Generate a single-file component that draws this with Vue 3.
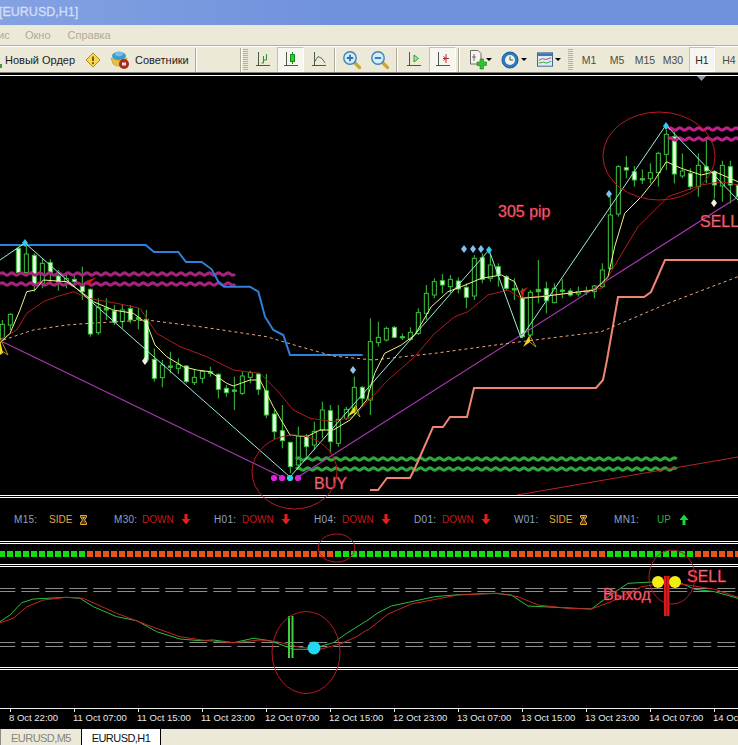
<script setup>
// all chart readings are in 3x crop units, converted to page pixels here
const left = (x, y) => [x / 3, 230 + y / 3];
const right = (x, y) => [368 + x / 3, 90 + y / 3];

function toPts(list, conv) {
  return list.map(([x, y]) => conv(x, y).map((v) => v.toFixed(1)).join(",")).join(" ");
}

function joinPts(a, b) {
  return toPts(a, left) + " " + toPts(b, right);
}

function wave(x0, x1, y, period, amp) {
  let d = `M${x0} ${y}`;
  let up = true;
  for (let x = x0; x < x1 - period / 2; x += period / 2) {
    d += ` Q${x + period / 4} ${y + (up ? -amp : amp) * 2} ${x + period / 2} ${y}`;
    up = !up;
  }
  return d;
}

// [bodyTop, bodyBottom, high, low, kind]  w = white filled, h = hollow, d = doji
const leftCandles = [
  [283, 325, 270, 330, "h"], [253, 285, 250, 300, "h"], [55, 128, 50, 135, "w"], [72, 128, 40, 135, "h"],
  [76, 165, 70, 185, "w"], [100, 160, 85, 175, "h"], [98, 130, 88, 165, "w"], [138, 155, 120, 182, "w"],
  [146, 155, 125, 175, "h"], [148, 155, 130, 165, "w"], [165, 185, 110, 210, "w"], [178, 312, 175, 320, "w"],
  [232, 308, 205, 315, "h"], [234, 240, 205, 270, "d"], [243, 277, 225, 285, "w"], [240, 275, 225, 295, "h"],
  [236, 270, 225, 280, "w"], [263, 268, 235, 298, "d"], [268, 390, 240, 395, "w"], [388, 445, 355, 455, "w"],
  [405, 443, 390, 472, "h"], [408, 412, 365, 430, "d"], [403, 415, 385, 432, "h"], [408, 455, 405, 460, "w"],
  [442, 458, 420, 465, "h"], [424, 445, 420, 460, "h"], [425, 430, 410, 440, "d"], [433, 478, 430, 505, "w"],
  [475, 488, 465, 500, "w"], [480, 484, 440, 540, "d"], [438, 490, 425, 495, "h"], [428, 442, 422, 460, "h"],
  [432, 478, 428, 495, "w"], [482, 555, 432, 565, "w"], [552, 605, 540, 630, "w"], [602, 632, 525, 655, "w"],
  [637, 710, 635, 730, "w"], [618, 705, 590, 720, "h"], [618, 650, 612, 680, "w"], [604, 645, 575, 660, "h"],
  [540, 600, 515, 625, "h"], [542, 635, 525, 670, "w"], [568, 640, 525, 650, "h"], [538, 565, 530, 570, "h"],
  [472, 540, 440, 555, "h"], [472, 505, 468, 530, "w"], [335, 510, 265, 555, "h"],
];
const rightCandles = [
  [742, 758, 695, 770, "h"], [715, 750, 710, 755, "h"], [712, 742, 708, 745, "w"], [740, 743, 730, 750, "d"],
  [727, 748, 712, 752, "h"], [668, 730, 655, 735, "h"], [610, 670, 585, 690, "h"], [575, 615, 565, 625, "h"],
  [572, 585, 552, 610, "w"], [568, 590, 555, 610, "h"], [573, 597, 562, 610, "w"], [592, 622, 580, 655, "w"],
  [505, 618, 495, 630, "h"], [503, 568, 490, 580, "w"], [525, 565, 490, 575, "h"], [530, 555, 520, 590, "w"],
  [560, 595, 555, 600, "w"], [596, 600, 565, 630, "d"], [625, 740, 595, 745, "w"], [607, 735, 600, 740, "h"],
  [598, 605, 510, 640, "d"], [596, 632, 575, 670, "w"], [595, 638, 580, 640, "h"], [600, 604, 568, 625, "d"],
  [603, 615, 595, 620, "w"], [605, 612, 590, 620, "h"], [602, 606, 590, 615, "d"], [588, 605, 585, 625, "h"],
  [540, 590, 520, 595, "h"], [375, 535, 320, 540, "h"], [230, 372, 225, 380, "h"], [233, 240, 198, 265, "w"],
  [245, 270, 228, 290, "w"], [266, 270, 238, 282, "d"], [248, 266, 220, 280, "h"], [190, 248, 185, 290, "h"],
  [133, 193, 120, 240, "h"], [140, 252, 125, 280, "w"], [243, 258, 190, 265, "h"], [250, 290, 235, 300, "w"],
  [226, 290, 190, 320, "h"], [230, 243, 150, 280, "w"], [245, 285, 240, 325, "w"], [226, 288, 212, 335, "h"],
  [230, 285, 212, 340, "w"], [285, 320, 275, 340, "w"],
];

const candles = [
  ...leftCandles.map((c, i) => ({ c, x: 2.33 + 8 * i, y: 230 })),
  ...rightCandles.map((c, i) => ({ c, x: 2.33 + 8 * (i + 47), y: 90 })),
].map(({ c, x, y }) => ({
  x,
  top: y + c[0] / 3,
  h: Math.max((c[1] - c[0]) / 3, 1.2),
  high: y + c[2] / 3,
  low: y + c[3] / 3,
  kind: c[4],
}));

const bluePts = toPts(
  [[0, 45], [437, 45], [462, 66], [535, 66], [558, 96], [605, 96], [635, 118], [655, 155], [672, 170], [750, 170],
   [775, 185], [795, 260], [820, 300], [850, 315], [870, 375], [1088, 375]],
  left
);
const salmonPts =
  "370,490 378,490 387,478 410,478 415,468 433,427 443,427 450,417 467,417 474,388 596,388 603,380 607,360 618,297 644,297 651,292 665,260 738,260";
const zigzagPts = "0,260 25,243 290,477 489,250 521,338 666,125 738,200";

const yellowPts = joinPts(
  [[0, 340], [30, 310], [60, 240], [80, 185], [105, 180], [130, 150], [200, 155], [250, 190], [280, 215], [340, 240],
   [400, 250], [440, 280], [465, 345], [500, 380], [550, 410], [590, 420], [630, 425], [680, 460], [700, 468],
   [750, 450], [780, 450], [820, 530], [870, 615], [920, 620], [960, 600], [1000, 600], [1050, 570], [1100, 510]],
  [[20, 850], [50, 790], [100, 765], [140, 735], [190, 650], [240, 605], [280, 590], [340, 565], [400, 555],
   [440, 575], [460, 625], [520, 620], [600, 610], [680, 600], [720, 560], [740, 470], [770, 370], [820, 320],
   [860, 270], [895, 215], [940, 235], [1000, 255], [1040, 245], [1110, 275]]
);
const redPts = joinPts(
  [[0, 330], [50, 300], [80, 250], [130, 215], [170, 200], [220, 185], [265, 205], [350, 220], [420, 235], [470, 310],
   [540, 350], [620, 380], [700, 420], [780, 430], [830, 480], [880, 540], [930, 565], [1000, 575], [1060, 560]],
  [[60, 870], [140, 800], [200, 730], [260, 680], [300, 665], [360, 615], [420, 600], [460, 625], [520, 618],
   [600, 610], [700, 595], [750, 510], [810, 410], [880, 340], [900, 320], [1000, 285], [1060, 275], [1110, 285]]
);
const dashPts = joinPts(
  [[10, 330], [100, 300], [200, 285], [270, 280], [440, 270], [600, 290], [800, 320], [900, 350], [1000, 378]],
  [[15, 810], [200, 790], [420, 760], [700, 725], [900, 640], [1110, 560]]
);

const waves = [
  { d: wave(0, 237, 274, 9.4, 1.2), color: "#a8247c" },
  { d: wave(0, 237, 284, 9.4, 1.2), color: "#a8247c" },
  { d: wave(668, 745, 129, 9.4, 1.2), color: "#c0208a" },
  { d: wave(668, 745, 139, 9.4, 1.2), color: "#c0208a" },
  { d: wave(296, 678, 459, 9.4, 1.2), color: "#2ea83c" },
  { d: wave(296, 678, 469, 9.4, 1.2), color: "#2ea83c" },
];

const diamonds = [
  [25, 243, "#35c8f0"], [464, 249, "#7cc0f4"], [473, 249, "#7cc0f4"], [481, 249, "#7cc0f4"], [489, 250, "#35c8f0"],
  [609, 194, "#7cc0f4"], [666, 126, "#35c8f0"], [353, 370, "#8cc4ec"], [145, 361, "#f4f4e8"], [714, 203, "#f4f4e8"],
];
const dots = [[274, "#e020e0"], [282, "#e020e0"], [290, "#30d0e0"], [298, "#e020e0"]];

const status = [
  { tf: "M15:", text: "SIDE", kind: "side" },
  { tf: "M30:", text: "DOWN", kind: "down" },
  { tf: "H01:", text: "DOWN", kind: "down" },
  { tf: "H04:", text: "DOWN", kind: "down" },
  { tf: "D01:", text: "DOWN", kind: "down" },
  { tf: "W01:", text: "SIDE", kind: "side" },
  { tf: "MN1:", text: "UP", kind: "up" },
];

function barColor(i) {
  if (i <= 10 || (i >= 42 && i <= 63) || (i >= 76 && i <= 86)) return "green";
  return "orange";
}
const squares = Array.from({ length: 93 }, (_, i) => barColor(i));

const oscGreen = joinOsc(
  [[0, 395], [30, 375], [65, 338], [100, 327], [200, 322], [240, 325], [280, 350], [350, 380], [410, 392], [470, 425],
   [540, 447], [600, 452], [640, 450], [700, 458], [760, 445], [810, 452], [860, 470], [880, 478], [930, 478],
   [1000, 458], [1040, 430], [1100, 392]],
  [[0, 390], [30, 368], [70, 348], [200, 320], [270, 314], [380, 310], [430, 315], [480, 348], [560, 352], [670, 357],
   [720, 320], [780, 280], [870, 275], [940, 280], [980, 298], [1040, 305], [1110, 325]]
);
const oscRed = joinOsc(
  [[0, 398], [40, 385], [80, 350], [130, 330], [200, 322], [250, 325], [350, 370], [450, 408], [540, 440], [620, 452],
   [700, 458], [780, 450], [830, 455], [900, 472], [960, 478], [1020, 462], [1070, 440], [1100, 420]],
  [[0, 420], [60, 372], [130, 342], [270, 315], [390, 310], [450, 320], [510, 345], [600, 355], [670, 357], [730, 335],
   [820, 290], [900, 278], [960, 285], [1040, 298], [1110, 322]]
);

function joinOsc(a, b) {
  const conv = (ox) => (p) => `${(ox + p[0] / 3).toFixed(1)},${(490 + p[1] / 3).toFixed(1)}`;
  return a.map(conv(0)).join(" ") + " " + b.map(conv(368)).join(" ");
}

const labels = [
  "8 Oct 22:00", "11 Oct 07:00", "11 Oct 15:00", "11 Oct 23:00", "12 Oct 07:00", "12 Oct 15:00",
  "12 Oct 23:00", "13 Oct 07:00", "13 Oct 15:00", "13 Oct 23:00", "14 Oct 07:00", "14 Oct 15:00",
];
const timeframes = ["M1", "M5", "M15", "M30", "H1", "H4"];
</script>

<template>
  <div class="terminal">
    <header class="title">[EURUSD,H1]</header>

    <nav class="menu">
      <span class="first">ис</span>
      <span>Окно</span>
      <span>Справка</span>
    </nav>

    <div class="toolbar">
      <svg class="stub" width="5" height="25" viewBox="0 0 5 25"><rect x="0" y="17" width="2" height="4" fill="#3c9a3c" /></svg>
      <span class="tb-label order">Новый Ордер</span>
      <span class="tool warn">
        <svg width="16" height="16" viewBox="0 0 16 16">
          <path d="M8 1 15 8 8 15 1 8Z" fill="#f8d84c" stroke="#b08a2c" stroke-linejoin="round" />
          <path d="M8 4.5V9" stroke="#7a5a10" stroke-width="2" />
          <circle cx="8" cy="11.2" r="1.1" fill="#7a5a10" />
        </svg>
      </span>
      <span class="tool expert">
        <svg width="20" height="20" viewBox="0 0 20 20">
          <ellipse cx="9" cy="6" rx="7" ry="4.2" fill="#3f9ad0" />
          <ellipse cx="9" cy="3.8" rx="4" ry="2.4" fill="#76c0e8" />
          <path d="M1 8 Q9 12 17 8 L15 15 Q8 18 3 14Z" fill="#e4c23e" stroke="#a8892a" stroke-width=".5" />
          <circle cx="14" cy="14" r="5" fill="#b02818" />
          <rect x="12" y="12.5" width="4" height="3" fill="#f2e6d8" />
        </svg>
      </span>
      <span class="tb-label advisors">Советники</span>
      <i class="sep"></i>
      <span class="tb-gap"></span>
      <i class="sep"></i>
      <i class="grip"></i>

      <span class="tool w29">
        <svg width="16" height="18" viewBox="0 0 16 18" fill="none" stroke="#4c5a48">
          <path d="M3.5 1V15M1 14.500H15" />
          <path d="M8.500 5V12M11.500 3V9" stroke="#2f8f2f" />
          <path d="M6.500 12H8.500M11.500 9H9" stroke="#2f8f2f" />
        </svg>
      </span>
      <span class="tool w27 on">
        <svg width="16" height="18" viewBox="0 0 16 18" fill="none" stroke="#4c5a48">
          <path d="M3.500 1V15M1 14.500H15" />
          <path d="M9.500 1V13" stroke="#1c8a1c" />
          <rect x="7.500" y="3.500" width="4" height="7" fill="#29d029" stroke="#1c8a1c" />
        </svg>
      </span>
      <span class="tool w29">
        <svg width="16" height="18" viewBox="0 0 16 18" fill="none" stroke="#4c5a48">
          <path d="M3.500 1V15M1 14.500H15" />
          <path d="M3.500 11 7 5.500 11 7.500 14 12" stroke="#5c6c58" />
        </svg>
      </span>
      <i class="sep s-zoom"></i>
      <span class="tool z-first">
        <svg width="20" height="20" viewBox="0 0 20 20">
          <path d="M12 12 17.500 17.500" stroke="#c8a83c" stroke-width="3.400" stroke-linecap="round" />
          <circle cx="8" cy="8" r="6.200" fill="#d4ecf8" stroke="#3f82b4" stroke-width="1.400" />
          <path d="M4.800 8H11.200M8 4.800V11.200" stroke="#2c70b8" stroke-width="1.800" />
        </svg>
      </span>
      <span class="tool">
        <svg width="20" height="20" viewBox="0 0 20 20">
          <path d="M12 12 17.500 17.500" stroke="#c8a83c" stroke-width="3.400" stroke-linecap="round" />
          <circle cx="8" cy="8" r="6.200" fill="#d4ecf8" stroke="#3f82b4" stroke-width="1.400" />
          <path d="M4.800 8H11.200" stroke="#2c70b8" stroke-width="1.800" />
        </svg>
      </span>
      <i class="sep s-mid"></i>
      <span class="tool t-first">
        <svg width="16" height="18" viewBox="0 0 16 18" fill="none" stroke="#4c5a48">
          <path d="M3.500 1V15M1 14.500H15" />
          <path d="M8 4 12.500 7.500 8 11Z" fill="#9fe89f" stroke="#2f9f2f" />
        </svg>
      </span>
      <span class="tool w27 on t-active">
        <svg width="16" height="18" viewBox="0 0 16 18" fill="none" stroke="#4c5a48">
          <path d="M3.500 1V15M1 14.500H15" />
          <path d="M11 3V12M8 7.500H14" stroke="#b83030" />
          <path d="M8.500 5.500 11 7.500 8.500 9.500" stroke="#b83030" />
        </svg>
      </span>
      <i class="sep s-drop"></i>
      <span class="drop d-new">
        <svg width="20" height="21" viewBox="0 0 20 21">
          <path d="M2.500 1.500H10L13 4.500V15H2.500Z" fill="#f7f6f0" stroke="#6c6c64" />
          <path d="M6 5V12M4 8H8" stroke="#6c6c64" />
          <path d="M9 13H12V10H15.500V13H18.500V16.500H15.500V20H12V16.500H9Z" fill="#33c233" stroke="#1d7a1d" stroke-width=".6" />
        </svg>
        <b class="caret"></b>
      </span>
      <span class="drop d-clock">
        <svg width="18" height="18" viewBox="0 0 18 18">
          <circle cx="9" cy="9" r="8" fill="#2a7cc4" stroke="#1b5a98" />
          <circle cx="9" cy="9" r="5" fill="#f4f2e6" />
          <path d="M9 5.500V9H12" stroke="#4a4a30" fill="none" />
        </svg>
        <b class="caret"></b>
      </span>
      <span class="drop d-tpl">
        <svg width="16" height="15" viewBox="0 0 18 16">
          <rect x=".5" y=".5" width="17" height="15" fill="#dfeaf4" stroke="#2c5a8c" />
          <rect x="1" y="1" width="16" height="3" fill="#3874b0" />
          <path d="M2 9 6 7 10 8 16 6" stroke="#b84040" fill="none" />
          <path d="M2 12 7 11 11 12 16 10" stroke="#2f9f2f" fill="none" />
        </svg>
        <b class="caret"></b>
      </span>
      <i class="grip g-tf"></i>
      <span
        v-for="tf in timeframes"
        :key="tf"
        class="tf"
        :class="{ on: tf === 'H1' }"
      >{{ tf }}</span>
    </div>

    <main class="chart">
      <svg class="main" viewBox="0 76 738 419">
        <g v-for="(c, i) in candles" :key="i">
          <line :x1="c.x" :x2="c.x" :y1="c.high" :y2="c.low" stroke="#3ec43e" />
          <rect
            :x="c.x - 2"
            :y="c.top"
            width="4"
            :height="c.h"
            :fill="c.kind === 'w' ? '#eafbe8' : c.kind === 'd' ? '#3ec43e' : '#000'"
            stroke="#3ec43e"
            stroke-width="1"
          />
        </g>

        <path v-for="(w, i) in waves" :key="i" :d="w.d" fill="none" :stroke="w.color" stroke-width="3.2" />

        <polyline :points="bluePts" class="ln" stroke="#2f7fdc" stroke-width="2" />
        <polyline :points="salmonPts" class="ln" stroke="#ee8672" stroke-width="2" />
        <line x1="3" y1="342" x2="280" y2="476" stroke="#a83ab4" stroke-width="1.2" />
        <line x1="298" y1="477" x2="738" y2="197" stroke="#a83ab4" stroke-width="1.2" />
        <line x1="517" y1="495" x2="738" y2="457" stroke="#b82424" />
        <polyline :points="dashPts" class="ln" stroke="#eaa678" stroke-dasharray="3 3" />
        <polyline :points="redPts" class="ln" stroke="#b01c1c" />
        <polyline :points="zigzagPts" class="ln" stroke="#9ceedd" />
        <polyline :points="yellowPts" class="ln" stroke="#f2f28c" />

        <g class="fish">
          <path d="M0 340 3 353 0 355Z" />
          <path d="M347 417 355.500 405 355.500 412Z" />
          <path d="M523 347 529.500 335 530 342Z" />
        </g>
        <g class="fish-line">
          <path d="M0 338 8 355 2 351" />
          <path d="M355.500 405 360 417 355.500 412" />
          <path d="M529.500 335 536 347 530 342" />
        </g>
        <path d="M97 277 86 281 90 287 91 282Z" fill="#c81c1c" />
        <path d="M528 287 520 291 523 298 524 292Z" fill="#d01c1c" />

        <path
          v-for="(d, i) in diamonds"
          :key="i"
          :d="`M${d[0]} ${d[1] - 4}l3 4-3 4-3-4Z`"
          :fill="d[2]"
        />
        <circle v-for="(d, i) in dots" :key="i" :cx="d[0]" cy="478" r="3.100" :fill="d[1]" />

        <text x="498" y="217" class="note">305 pip</text>
        <text x="700" y="227" class="note">SELL</text>
        <text x="314" y="489" class="note">BUY</text>
      </svg>

      <div class="status">
        <div v-for="s in status" :key="s.tf" class="status-item" :class="s.kind">
          <span class="tf-name">{{ s.tf }}</span>
          <span class="tf-value">{{ s.text }}</span>
          <svg v-if="s.kind === 'side'" class="sign" width="7" height="10" viewBox="0 0 7 10">
            <path d="M.5 .5H6.500V2L4.500 5 6.500 8V9.500H.5V8L2.500 5 .5 2Z" fill="#5a3c08" stroke="#e8a83c" />
            <path d="M2 2H5L3.500 4.500Z" fill="#e8a83c" />
          </svg>
          <svg v-else-if="s.kind === 'down'" class="sign" width="10" height="11" viewBox="0 0 10 11">
            <path d="M3.500 0H6.500V5H9.500L5 10.500 .5 5H3.500Z" fill="#e81c1c" />
          </svg>
          <svg v-else class="sign" width="10" height="11" viewBox="0 0 10 11">
            <path d="M3.500 11H6.500V6H9.500L5 .5 .5 6H3.500Z" fill="#18d83c" />
          </svg>
        </div>
      </div>

      <div class="bars">
        <i v-for="(c, i) in squares" :key="i" :class="c"></i>
      </div>

      <svg class="osc" viewBox="0 567 738 100">
        <g class="levels">
          <line x1="-3.700" x2="738" y1="588.500" y2="588.500" />
          <line x1="-3.700" x2="738" y1="591.500" y2="591.500" />
          <line x1="-3.700" x2="738" y1="642.500" y2="642.500" />
          <line x1="-3.700" x2="738" y1="646.500" y2="646.500" />
        </g>
        <polyline :points="oscGreen" class="ln" stroke="#28c03c" />
        <polyline :points="oscRed" class="ln" stroke="#c82424" />
        <path d="M289 616V658M292.500 616V658" stroke="#3fd03f" stroke-width="2" />
        <rect x="664" y="576" width="5.500" height="40" fill="#e01818" />
        <line x1="666.700" x2="666.700" y1="576" y2="616" stroke="#98100f" />
        <circle cx="314" cy="648" r="6.500" fill="#22d8f0" />
        <circle cx="658" cy="582" r="6" fill="#f2ee14" />
        <circle cx="675" cy="582" r="6" fill="#f2ee14" />
        <text x="603" y="600" class="note">Выход</text>
        <text x="687" y="582" class="note">SELL</text>
      </svg>

      <div class="blank"></div>

      <div class="axis">
        <div v-for="l in labels" :key="l" class="tick"><span>{{ l }}</span></div>
      </div>

      <svg class="marks" viewBox="0 0 738 745">
        <ellipse cx="659" cy="156" rx="56" ry="44" />
        <ellipse cx="294.500" cy="472" rx="42.500" ry="37" />
        <ellipse cx="336.500" cy="548" rx="18.500" ry="14" />
        <ellipse cx="306" cy="652.500" rx="34" ry="41" />
        <ellipse cx="672" cy="577" rx="23" ry="27" />
        <path d="M697 76H706L701.500 81Z" fill="#8c96a0" />
      </svg>
    </main>

    <footer class="tabs">
      <span class="tab off">EURUSD,M5</span>
      <span class="tab active">EURUSD,H1</span>
    </footer>
  </div>
</template>

<style>
html,
body {
  margin: 0;
  background: #000;
}
</style>

<style scoped>
.terminal {
  width: 738px;
  height: 745px;
  overflow: hidden;
  display: flex;
  flex-direction: column;
  background: #000;
  font-family: "Liberation Sans", Arial, sans-serif;
}

.title {
  height: 25px;
  box-sizing: border-box;
  flex: none;
  padding-top: 5px;
  background: linear-gradient(90deg, #84a2e2 0, #7092dc 45%, #7092dc 100%);
  color: #d6dff5;
  font-size: 12.5px;
  -webkit-text-stroke: 0.3px #d6dff5;
  white-space: nowrap;
  text-indent: -1px;
}

.menu {
  height: 21px;
  box-sizing: border-box;
  flex: none;
  display: flex;
  align-items: center;
  gap: 17px;
  padding-bottom: 1px;
  background: #ece9d8;
  border-bottom: 1px solid #b4b1a2;
  color: #aeab9c;
  font-size: 11px;
}
.menu .first {
  margin-left: -2px;
  width: 10px;
}

.toolbar {
  height: 27px;
  box-sizing: border-box;
  flex: none;
  display: flex;
  align-items: center;
  background: #ece9d8;
  border-top: 1px solid #fff;
  border-bottom: 1px solid #7c7a70;
  color: #1c1c1c;
  font-size: 11px;
  white-space: nowrap;
}
.stub {
  flex: none;
}
.tb-label {
  flex: none;
}
.order {
  width: 76px;
}
.advisors {
  width: 60px;
}
.tool {
  flex: none;
  width: 28px;
  height: 25px;
  box-sizing: border-box;
  display: flex;
  align-items: center;
  justify-content: center;
}
.tool.warn {
  width: 24px;
}
.tool.expert {
  width: 30px;
}
.tool.w29 {
  width: 29px;
}
.tool.w27 {
  width: 27px;
}
.on {
  background: #f6f5ef;
  border: 1px solid #c4c1b0;
  border-bottom-color: #fff;
  border-right-color: #fff;
}
.sep {
  flex: none;
  width: 1px;
  height: 24px;
  background: #aeab9c;
  border-right: 1px solid #fff;
}
.tb-gap {
  flex: none;
  width: 43px;
}
.grip {
  flex: none;
  width: 5px;
  height: 21px;
  margin-left: 1px;
  background: repeating-linear-gradient(0deg, #b4b1a2 0 1px, #ece9d8 1px 2px);
}
.s-zoom {
  margin-left: 1px;
}
.z-first {
  margin-left: 2px;
}
.s-mid {
  margin-left: 2px;
}
.t-first {
  margin-left: 2px;
}
.t-active {
  margin-left: 1px;
}
.s-drop {
  margin-left: 2px;
}
.drop {
  flex: none;
  display: flex;
  align-items: center;
}
.d-new {
  width: 35px;
  margin-left: 8px;
  gap: 0;
}
.d-new .caret {
  margin-left: -2px;
}
.d-clock {
  width: 32px;
  margin-left: -2px;
  gap: 2px;
}
.d-tpl {
  width: 30px;
  margin-left: 4px;
  gap: 2px;
}
.caret {
  width: 0;
  height: 0;
  border-left: 3px solid transparent;
  border-right: 3px solid transparent;
  border-top: 3px solid #000;
}
.g-tf {
  margin-left: 1px;
  margin-right: 2px;
}
.tf {
  flex: none;
  width: 28px;
  height: 25px;
  box-sizing: border-box;
  display: flex;
  align-items: center;
  justify-content: center;
  color: #4c4c44;
  font-size: 10.5px;
}
.tf.on {
  width: 26px;
  margin-left: 2px;
  color: #2a2a2a;
}

.chart {
  position: relative;
  flex: none;
  height: 653px;
  margin-top: 2px;
  border-top: 1px solid #fff;
  box-sizing: border-box;
  background: #000;
}
.main {
  display: block;
  width: 738px;
  height: 419px;
  border-bottom: 1px solid #fff;
}
.ln {
  fill: none;
}
.fish path {
  fill: #f2d81c;
}
.fish-line path {
  fill: none;
  stroke: #d8b428;
  stroke-width: 0.8px;
}
.note {
  font-family: "Liberation Sans", Arial, sans-serif;
  font-size: 16px;
  fill: #e8909c;
  stroke: #d0182e;
  stroke-width: 0.6px;
}

.status {
  height: 43px;
  margin-top: 1px;
  padding-left: 14px;
  display: flex;
  align-items: center;
  border-top: 1px solid #fff;
  border-bottom: 1px solid #fff;
  font-size: 10px;
}
.status-item {
  flex: none;
  width: 100px;
  display: flex;
  align-items: center;
  color: #8ea2c4;
}
.tf-name {
  width: 28px;
  letter-spacing: 0.3px;
}
.side .tf-name {
  width: 35px;
}
.up .tf-name {
  width: 43px;
}
.side .tf-value {
  color: #e8a43c;
  width: 31px;
}
.down .tf-value {
  color: #c41a1a;
  width: 39px;
}
.up .tf-value {
  color: #1cb83a;
  width: 22px;
}
.sign {
  flex: none;
}

.bars {
  height: 20px;
  margin-top: 1px;
  display: flex;
  align-items: center;
  gap: 2px;
  border-top: 1px solid #fff;
  border-bottom: 1px solid #fff;
  overflow: hidden;
}
.bars i {
  flex: none;
  width: 6px;
  height: 6px;
}
.bars i:first-child {
  margin-left: -1px;
}
.bars .green {
  background: #12dc12;
}
.bars .orange {
  background: #e6541a;
}

.osc {
  display: block;
  width: 738px;
  height: 100px;
  margin-top: 1px;
  border-top: 1px solid #fff;
  border-bottom: 1px solid #fff;
}
.levels line {
  stroke: #8c8c8c;
  stroke-dasharray: 18 6;
  stroke-dashoffset: -1;
}

.blank {
  height: 38px;
  margin-top: 1px;
  border-top: 1px solid #fff;
}

.axis {
  height: 18px;
  display: flex;
  padding-left: 10px;
  border-top: 1px solid #eee;
}
.tick {
  flex: none;
  width: 64px;
  position: relative;
  box-sizing: border-box;
  padding-top: 3px;
  color: #e8e8e8;
  font-size: 9.5px;
  white-space: nowrap;
}
.tick span {
  margin-left: -1px;
}
.tick::before {
  content: "";
  position: absolute;
  left: 0;
  top: 0;
  width: 1px;
  height: 3px;
  background: #eee;
}

.marks {
  position: absolute;
  left: 0;
  top: -76px;
  width: 738px;
  height: 745px;
  pointer-events: none;
}
.marks ellipse {
  fill: none;
  stroke: #b81a22;
}

.tabs {
  flex: 1;
  display: flex;
  background: #ece9d8;
  border-top: 1px solid #000;
  font-size: 11px;
  letter-spacing: -0.55px;
}
.tab {
  flex: none;
  box-sizing: border-box;
  display: flex;
  align-items: center;
  justify-content: center;
  height: 17px;
  border-right: 1px solid #000;
}
.tab.off {
  width: 82px;
  color: #84847c;
  border-left: 1px solid #8c8c84;
}
.tab.active {
  width: 79px;
  background: #fff;
  color: #111;
}
</style>
